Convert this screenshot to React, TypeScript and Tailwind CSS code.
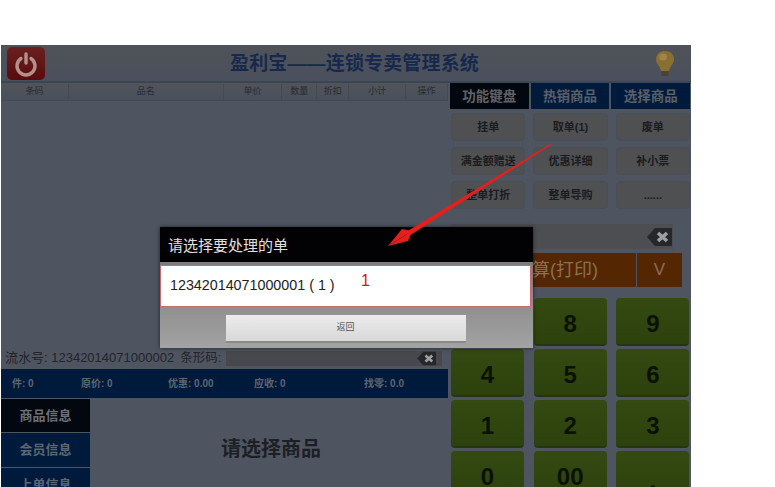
const cjk = { fontFamily: '"Liberation Sans","Noto Sans CJK SC",sans-serif' };

const cols: [string, string][] = [
  ['条码', 'w-[68px]'], ['品名', 'w-[155px]'], ['单价', 'w-[59px]'], ['数量', 'w-[35px]'],
  ['折扣', 'w-[32px]'], ['小计', 'w-[57px]'], ['操作', 'w-[42px]'],
];
const fnKeys = ['挂单', '取单(1)', '废单', '满金额赠送', '优惠详细', '补小票', '整单打折', '整单导购', '......'];
const nums = ['7', '8', '9', '4', '5', '6', '1', '2', '3', '0', '00', '.'];

function Backspace({ w = 26, h = 20 }: { w?: number; h?: number }) {
  return (
    <svg width={w} height={h} viewBox="0 0 26 20">
      <path d="M0 10 L8 1 H25 V19 H8 Z" fill="#25272b" />
      <path d="M11 6 L20 14 M20 6 L11 14" stroke="#9d9fa1" strokeWidth="3.6" />
    </svg>
  );
}

export default function App() {
  return (
    <div className="relative w-[775px] h-[487px] overflow-hidden bg-white pt-[45px]" style={cjk}>
      <div className="w-[690px] h-[442px] ml-px bg-[#4f5461] flex flex-col overflow-hidden">
        {/* top bar */}
        <div className="h-[38px] shrink-0 relative flex items-center justify-center pt-[3px] bg-gradient-to-b from-[#4f5258] to-[#4a505d] border-b-2 border-[#3c4552]">
          <div className="absolute left-[6px] top-[2px] w-[38px] h-[33px] rounded-[5px] bg-gradient-to-b from-[#6a2020] to-[#5a0a0c] flex items-center justify-center">
            <svg width="26" height="26" viewBox="0 0 26 26" fill="none" stroke="#b3918b" strokeWidth="3.4" strokeLinecap="round">
              <path d="M8 7.5 A9 9 0 1 0 18 7.5" />
              <path d="M13 3 V12" />
            </svg>
          </div>
          <span className="text-[19px] font-bold text-[#16294d] tracking-[0.15px] ml-[17px]">盈利宝——连锁专卖管理系统</span>
          <svg className="absolute left-[653px] top-[5px]" width="22" height="28" viewBox="0 0 22 28">
            <path d="M11 1 C5 1 2 5 2 9.5 C2 14 6 16 7 21 H15 C16 16 20 14 20 9.5 C20 5 17 1 11 1 Z" fill="#8a6f32" />
            <ellipse cx="9" cy="7" rx="4" ry="3.5" fill="#9f8548" />
            <rect x="7.5" y="21" width="7" height="5" fill="#4a4237" />
          </svg>
        </div>

        <div className="flex flex-1 min-h-0">
          {/* left column */}
          <div className="w-[447px] shrink-0 flex flex-col">
            <div className="h-[18px] shrink-0 flex pt-[1px] bg-gradient-to-b from-[#52545a] to-[#49505c] border-b border-[#454b53]">
              {cols.map(([t, w]) => (
                <div key={t} className={`${w} border-r border-[#434a54] flex items-center justify-center text-[9px] text-[#282b31]`}>{t}</div>
              ))}
            </div>
            <div className="h-[246px] shrink-0" />
            <div className="h-[22px] shrink-0 flex items-center pl-[4px] text-[13px] text-[#212429] whitespace-nowrap">
              <span>流水号: 12342014071000002</span>
              <span className="ml-[6px] text-[12.5px]">条形码:</span>
              <div className="ml-auto mr-[5px] w-[218px] h-[17px] bg-[#47484d] border border-[#50545c] flex items-center justify-end pr-[3px]">
                <Backspace w={24} h={15} />
              </div>
            </div>
            <div className="h-[29px] shrink-0 flex items-center bg-[#001a3c] text-[10px] font-bold text-[#5e6671] whitespace-nowrap">
              <span className="w-[80px] pl-[11px]">件: 0</span>
              <span className="w-[87px]">原价: 0</span>
              <span className="w-[86px]">优惠: 0.00</span>
              <span className="w-[110px]">应收: 0</span>
              <span>找零: 0.0</span>
            </div>
            <div className="flex flex-1 min-h-0 overflow-hidden">
              <div className="w-[89px] shrink-0 flex flex-col gap-px pt-px">
                <div className="h-[33px] shrink-0 bg-[#030810] flex items-center justify-center text-[13px] font-bold text-[#6c7076]">商品信息</div>
                <div className="h-[34px] shrink-0 bg-[#001a3c] flex items-center justify-center text-[13px] font-bold text-[#5e6671]">会员信息</div>
                <div className="h-[34px] shrink-0 bg-[#001a3c] flex items-center justify-center text-[13px] font-bold text-[#5e6671]">上单信息</div>
              </div>
              <div className="flex-1 flex justify-center pt-[36px] pl-[4px] text-[20px] font-bold text-[#1c1f24]">请选择商品</div>
            </div>
          </div>

          {/* right column */}
          <div className="w-[240px] ml-[2px] shrink-0 flex flex-col">
            <div className="h-[26px] shrink-0 grid grid-cols-3 gap-[2px] text-[13.5px] font-bold">
              <div className="bg-[#030810] pt-[2px] text-[#606366] flex items-center justify-center">功能键盘</div>
              <div className="bg-[#001a3c] pt-[2px] text-[#5a6069] flex items-center justify-center">热销商品</div>
              <div className="bg-[#001a3c] pt-[2px] text-[#5a6069] flex items-center justify-center">选择商品</div>
            </div>
            <div className="mt-[4px] grid grid-cols-3 gap-x-[8px] gap-y-[6px] pl-px">
              {fnKeys.map(k => (
                <div key={k} className="h-[28px] rounded-[4px] bg-[#4f5052] border border-[#494e58] flex items-center justify-center text-[11px] font-bold text-[#1a1c20] whitespace-nowrap">{k}</div>
              ))}
            </div>
            <div className="mt-[15px] ml-px mr-[17px] h-[25px] shrink-0 bg-[#4c4e51] flex items-center justify-end">
              <Backspace />
            </div>
            <div className="mt-[4px] h-[34px] ml-px shrink-0 flex text-[#8a7052] text-[18px]">
              <div className="w-[185px] bg-[#552602] flex items-center justify-end pr-[38px]">结算(打印)</div>
              <div className="w-[45px] ml-px bg-[#552602] flex items-center justify-center text-[17px]">V</div>
            </div>
            <div className="mt-[11px] grid grid-cols-3 gap-x-[9px] gap-y-[3px] ml-px">
              {nums.map(n => (
                <div key={n} className={`h-[48px] w-[73px] rounded-[4px] bg-gradient-to-b from-[#344a12] to-[#2c410c] border-b-2 border-[#263416] flex items-center justify-center text-[24px] font-bold text-[#0c1108] ${n === '.' ? 'pt-[14px]' : 'pt-[6px]'}`}>{n}</div>
              ))}
            </div>
          </div>
        </div>
      </div>

      {/* dialog */}
      <div className="absolute left-[160px] top-[227px] w-[373px] h-[121px] flex flex-col bg-gradient-to-b from-[#6c6c6c] to-[#a3a3a3] shadow-[0_0_4px_rgba(0,0,0,0.6)]">
        <div className="h-[35px] shrink-0 bg-[#020204] pl-[8px] pt-[3px] flex items-center text-[15px] text-[#e0e0e0]">请选择要处理的单</div>
        <div className="relative mt-[3px] mr-[2px] h-[42px] shrink-0 bg-white border border-[#c96a6e] flex items-center pl-[9px] text-[14.3px] text-[#222]">
          12342014071000001 ( 1 )
          <span className="absolute left-[200px] top-[5px] text-[16px] leading-5 text-[#d5102a]">1</span>
        </div>
        <div className="flex-1 flex justify-center items-start pt-[8px] pr-[2px]">
          <div className="w-[240px] h-[28px] bg-gradient-to-b from-[#ececec] to-[#d8d8d8] border-b-2 border-[#8a8a8a] flex items-center justify-center text-[9px] text-[#555]">返回</div>
        </div>
      </div>

      {/* arrow annotation */}
      <svg className="absolute left-0 top-0 pointer-events-none" width="775" height="487">
        <polygon points="550,144 551,145 409,236 406,232" fill="#e3201c" />
        <polygon points="388,246 412,231 402,229" fill="#e3201c" />
        <polygon points="388,246 412,231 408,241" fill="#e3201c" />
      </svg>
    </div>
  );
}
